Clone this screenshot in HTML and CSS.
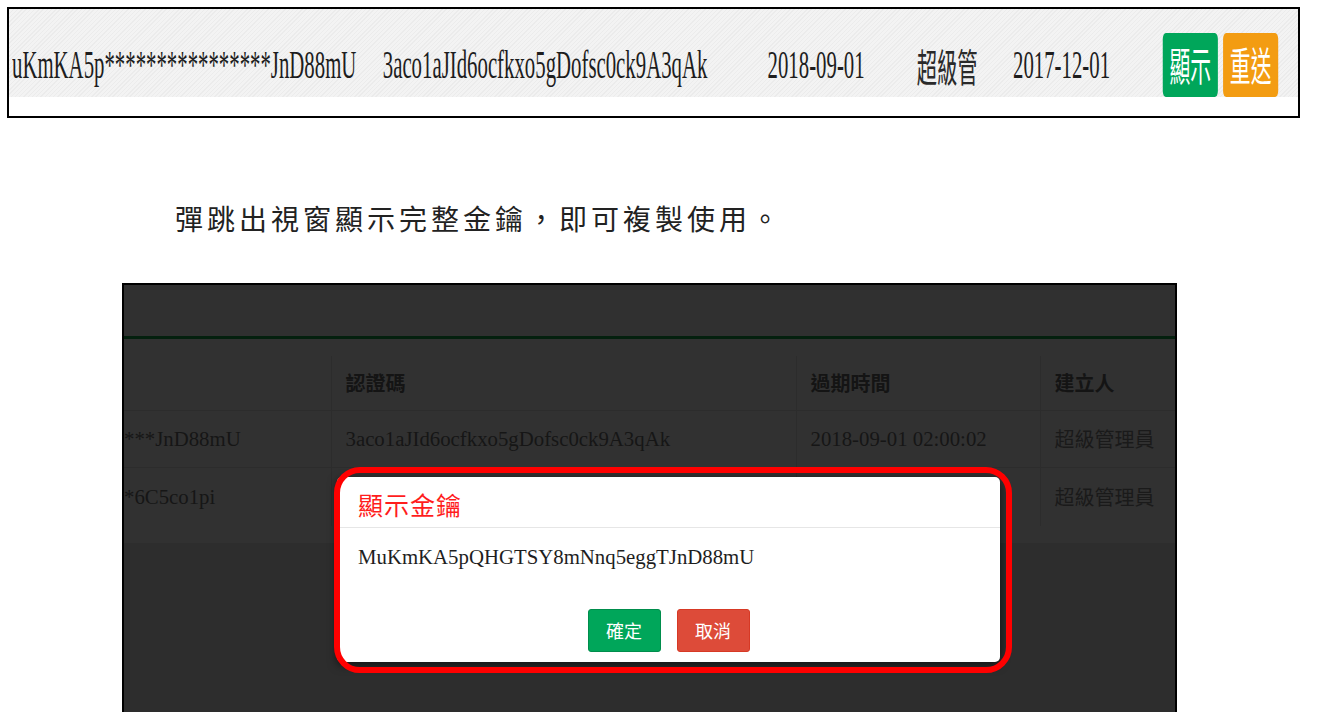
FILE: index.html
```html
<!DOCTYPE html>
<html lang="zh-Hant">
<head>
<meta charset="utf-8">
<title>顯示金鑰</title>
<link rel="stylesheet" href="styles.css">
</head>
<body>
<div class="shot">
  <div class="shot-row">
    <div class="row-scale">
      <span class="cell">uKmKA5p****************JnD88mU</span>
      <span class="cell">3aco1aJId6ocfkxo5gDofsc0ck9A3qAk</span>
      <span class="cell">2018-09-01</span>
      <span class="cell cjk">超級管</span>
      <span class="cell">2017-12-01</span>
      <span class="cell btns"><span class="tbtn green">顯示</span><span class="tbtn orange">重送</span></span>
    </div>
  </div>
</div>

<p class="note">彈跳出視窗顯示完整金鑰，即可複製使用。</p>

<div class="panel">
  <div class="panel-top"></div>
  <div class="box">
    <table class="keys">
      <colgroup>
        <col class="w1"><col class="w2"><col class="w3"><col class="w4">
      </colgroup>
      <thead>
        <tr class="hrow">
          <th class="first"></th>
          <th>認證碼</th>
          <th>過期時間</th>
          <th>建立人</th>
        </tr>
      </thead>
      <tbody>
        <tr class="r1">
          <td class="first">***JnD88mU</td>
          <td class="key">3aco1aJId6ocfkxo5gDofsc0ck9A3qAk</td>
          <td class="date">2018-09-01 02:00:02</td>
          <td class="cjk">超級管理員</td>
        </tr>
        <tr class="r2">
          <td class="first">*6C5co1pi</td>
          <td class="key"></td>
          <td class="date"></td>
          <td class="cjk">超級管理員</td>
        </tr>
      </tbody>
    </table>
  </div>

  <div class="modal">
    <div class="modal-header"><span class="modal-title">顯示金鑰</span></div>
    <div class="modal-body">MuKmKA5pQHGTSY8mNnq5eggTJnD88mU</div>
    <div class="modal-footer">
      <span class="mbtn ok">確定</span>
      <span class="mbtn cancel">取消</span>
    </div>
  </div>
  <div class="frame"></div>
</div>
</body>
</html>
```

FILE: styles.css
```css
html, body {
  margin: 0;
  padding: 0;
  background: #ffffff;
  overflow: hidden;
}

body {
  width: 1323px;
  height: 712px;
  font-family: "Liberation Serif", "Noto Sans CJK TC", serif;
}

/* ---------- top cropped row ---------- */
.shot {
  margin: 7px 0 0 7px;
  width: 1293px;
  height: 111px;
  box-sizing: border-box;
  border: 2px solid #000;
  background: #fff;
  overflow: hidden;
}

.shot-row {
  height: 88px;
  padding-left: 3px;
  display: flex;
  align-items: flex-end;
  background-color: #f3f3f3;
  background-image: repeating-linear-gradient(135deg, rgba(0,0,0,0.03) 0 1px, transparent 1px 3px);
}

.row-scale {
  display: grid;
  grid-template-columns: 713px 740px 287px 185px 288px auto;
  align-items: center;
  height: 64px;
  line-height: 64px;
  font-size: 40px;
  color: #1d1d1d;
  white-space: nowrap;
  transform: scaleX(0.52);
  transform-origin: left center;
}

.cjk {
  font-family: "Noto Sans CJK TC", sans-serif;
}

.row-scale .cjk {
  font-size: 39px;
  color: #2a2a2a;
}

.btns {
  display: flex;
  gap: 10px;
}

.tbtn {
  display: block;
  width: 106px;
  height: 64px;
  line-height: 62px;
  text-align: center;
  color: #fff;
  font-family: "Noto Sans CJK TC", sans-serif;
  font-size: 40px;
  border-radius: 6px;
}

.tbtn.green { background: #00a65a; }
.tbtn.orange { background: #f39c12; }

/* ---------- caption ---------- */
.note {
  margin: 82px 0 0 175px;
  font-family: "Noto Sans CJK TC", sans-serif;
  font-size: 28px;
  line-height: 36px;
  letter-spacing: 4px;
  color: #222;
  font-weight: 400;
}

/* ---------- dark panel ---------- */
.panel {
  position: relative;
  margin: 47px 0 0 122px;
  width: 1055px;
  height: 432px;
  box-sizing: border-box;
  border: 2px solid #000;
  border-bottom: none;
  background: #2d2d2d;
  overflow: hidden;
}

.panel-top {
  height: 51px;
  background: #303030;
  border-bottom: 3px solid #04200e;
}

.box {
  background: #313131;
  padding: 17px 0 17px 0;
}

.keys {
  border-collapse: collapse;
  table-layout: fixed;
  width: 1051px;
  color: #161616;
}

.w1 { width: 207px; }
.w2 { width: 465px; }
.w3 { width: 244px; }
.w4 { width: 135px; }

.keys th, .keys td {
  padding: 0 0 0 14px;
  text-align: left;
  vertical-align: middle;
  white-space: nowrap;
  overflow: hidden;
  border-left: 1px solid #2c2c2c;
  border-top: 1px solid #2c2c2c;
  font-size: 20.8px;
}

.keys th {
  font-family: "Noto Sans CJK TC", sans-serif;
  font-weight: 700;
  font-size: 20px;
  color: #141414;
}

.keys .first {
  padding-left: 0;
  border-left: none;
}

.keys thead th { border-top: none; }

.hrow { height: 54px; }
.r1 { height: 57px; }
.r2 { height: 59px; }

.keys td.cjk {
  font-size: 20px;
  color: #1a1a1a;
}

/* ---------- modal ---------- */
.modal {
  position: absolute;
  left: 213px;
  top: 192px;
  width: 663px;
  height: 185px;
  box-sizing: border-box;
  background: #fff;
  border-radius: 5px;
  box-shadow: 0 3px 10px rgba(0,0,0,0.6);
}

.modal-header {
  height: 51px;
  box-sizing: border-box;
  padding: 4px 21px 0;
  display: flex;
  align-items: center;
  border-bottom: 1px solid #e6e6e6;
}

.modal-title {
  font-family: "Noto Sans CJK TC", sans-serif;
  font-size: 25px;
  color: #ff1d1d;
  letter-spacing: 1px;
}

.modal-body {
  padding: 15px 21px;
  font-size: 20.8px;
  line-height: 28px;
  color: #1e1e1e;
}

.modal-footer {
  padding-top: 23px;
  display: flex;
  justify-content: center;
  gap: 16px;
}

.mbtn {
  display: block;
  width: 73px;
  height: 43px;
  box-sizing: border-box;
  border: 1px solid;
  border-radius: 3px;
  text-align: center;
  line-height: 40px;
  color: #fff;
  font-family: "Noto Sans CJK TC", sans-serif;
  font-size: 18px;
}

.mbtn.ok { background: #00a65a; border-color: #008d4c; }
.mbtn.cancel { background: #dd4b39; border-color: #d73925; }

.frame {
  position: absolute;
  left: 210px;
  top: 182px;
  width: 678px;
  height: 206px;
  box-sizing: border-box;
  border: 6px solid #ff0000;
  border-radius: 26px;
}
```
